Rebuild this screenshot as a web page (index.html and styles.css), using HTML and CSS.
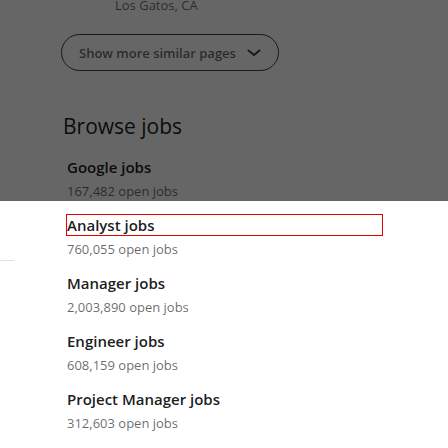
FILE: index.html
```html
<!DOCTYPE html>
<html>
<head>
<meta charset="utf-8">
<link rel="stylesheet" href="styles.css">
</head>
<body>
<div class="page">
  <aside class="side"><div class="side-rule"></div></aside>
  <main class="main">
    <div class="location">Los Gatos, CA</div>
    <button class="more-btn">Show more similar pages
      <svg class="chev" width="16" height="16" viewBox="0 0 16 16"><path d="M2.5 5.5 L8 10 L13.5 5.5" fill="none" stroke="currentColor" stroke-width="2" stroke-linecap="round" stroke-linejoin="round"/></svg>
    </button>
    <h2 class="heading">Browse jobs</h2>
    <ul class="jobs">
      <li class="job"><a class="job-title">Google jobs</a><div class="job-count">167,482 open jobs</div></li>
      <li class="job"><a class="job-title focused">Analyst jobs</a><div class="job-count">760,055 open jobs</div></li>
      <li class="job"><a class="job-title">Manager jobs</a><div class="job-count">2,003,890 open jobs</div></li>
      <li class="job"><a class="job-title">Engineer jobs</a><div class="job-count">608,159 open jobs</div></li>
      <li class="job"><a class="job-title">Project Manager jobs</a><div class="job-count">312,603 open jobs</div></li>
    </ul>
  </main>
</div>
<div class="overlay"></div>
</body>
</html>
```
FILE: styles.css
```css
html, body {
  margin: 0;
  padding: 0;
  background: #fff;
  overflow: hidden;
}
body {
  font-family: "Open Sans", "Noto Sans", sans-serif;
  color: rgba(0,0,0,0.9);
  width: 448px;
  height: 448px;
  position: relative;
}
.page {
  display: flex;
}
.side {
  width: 14px;
  flex: none;
}
.side-rule {
  margin-top: 260px;
  height: 1px;
  background: #e0e0e0;
}
.main {
  padding-left: 47px;
  flex: 1;
}
.location {
  margin-top: -5px;
  margin-left: 54px;
  font-size: 13px;
  line-height: 20px;
  color: rgba(0,0,0,0.6);
}
.more-btn {
  margin-top: 19px;
  display: flex;
  align-items: center;
  gap: 10px;
  height: 37px;
  width: 218px;
  padding: 0 0 0 17px;
  border: 1px solid rgba(0,0,0,0.75);
  border-radius: 20px;
  background: transparent;
  font-family: inherit;
  font-size: 13px;
  font-weight: 600;
  color: rgba(0,0,0,0.6);
}
.chev { flex: none; color: rgba(0,0,0,0.75); }
.heading {
  margin: 40px 0 0 2px;
  font-size: 21px;
  font-weight: 400;
  line-height: 30px;
  color: rgba(0,0,0,0.9);
}
.jobs {
  list-style: none;
  margin: 16px 0 0 6px;
  padding: 0;
  display: flex;
  flex-direction: column;
  gap: 14px;
}
.job-title {
  display: block;
  width: 315px;
  font-size: 15px;
  font-weight: 600;
  line-height: 20px;
  color: rgba(0,0,0,0.9);
}
.focused {
  outline: 1px solid #e60000;
}
.job-count {
  margin-top: 4px;
  font-size: 13px;
  line-height: 20px;
  color: rgba(0,0,0,0.6);
}
.overlay {
  position: absolute;
  left: 0;
  top: 0;
  width: 448px;
  height: 201px;
  background: rgba(0,0,0,0.6);
}
```
